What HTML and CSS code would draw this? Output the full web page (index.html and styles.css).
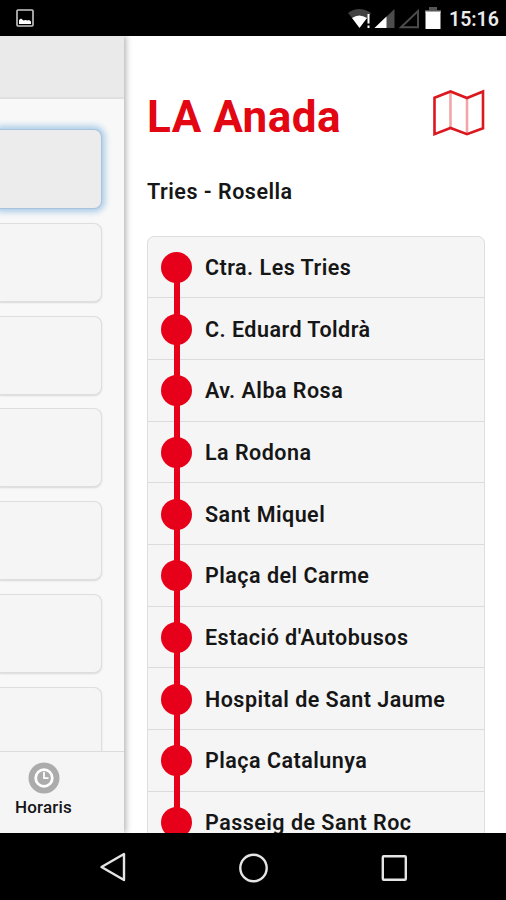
FILE: index.html
```html
<!DOCTYPE html>
<html lang="ca">
<head>
<meta charset="utf-8">
<meta name="viewport" content="width=device-width">
<title>LA Anada</title>
<link rel="stylesheet" href="styles.css">
</head>
<body>
<header class="status">
  <svg class="picture" width="18" height="18" viewBox="0 0 18 18"><rect x="1" y="1" width="16" height="16" rx="1" fill="none" stroke="#c8c8c8" stroke-width="1.6"/><path d="M3 15v-4l2-1.500 2.500 2 2-.5 2 .5 1.500-.5 2 1.500V15z" fill="#fff"/></svg>
  <svg class="signals" width="96" height="24" viewBox="0 0 96 24">
    <path d="M0 6Q11-2 23 6l-4 6H5z" fill="#414141"/><path d="M4 11q7-5 15 0l-7.500 10z" fill="#fff"/><path d="M20.500 7v9.500M20.500 18.500v2.500" stroke="#fff" stroke-width="2"/>
    <path d="M46.500 2v19h-20z" fill="#4c4c4c"/><path d="M38.500 9.500V21h-12z" fill="#fff"/>
    <path d="M70 4v16.200H53z" fill="none" stroke="#4c4c4c" stroke-width="2"/>
    <path d="M81 0h8v3h4v3H77V3h4z" fill="#555"/><path d="M77.500 4.500h15V22h-15z" fill="#fff"/>
  </svg>
  <time>15:16</time>
</header>
<div class="app">
  <aside class="side">
    <div class="side-head"></div>
    <div class="cards">
      <div class="card selected"></div>
      <div class="card"></div>
      <div class="card"></div>
      <div class="card"></div>
      <div class="card"></div>
      <div class="card"></div>
      <div class="card"></div>
    </div>
    <div class="tab">
      <svg width="32" height="32" viewBox="0 0 32 32"><circle cx="16" cy="16" r="15.500" fill="#acacac"/><circle cx="16" cy="16" r="8.300" fill="#acacac" stroke="#fff" stroke-width="2.800"/><path d="M16 10v6.200h4.500" fill="none" stroke="#fff" stroke-width="1.800"/></svg>
      <span>Horaris</span>
    </div>
  </aside>
  <main class="detail">
    <div class="heading">
      <h1>LA Anada</h1>
      <svg class="map" width="54" height="48" viewBox="0 0 54 48"><path d="M18.500 3v37M35 9v36" stroke="#f3a5a8" stroke-width="2.600"/><path d="M2.500 8.700L18.500 2.500 35 9l16-6.500v36.800L35 45.200 18.500 39 2.500 45.200z" fill="none" stroke="#db1720" stroke-width="2.600"/></svg>
    </div>
    <h2>Tries - Rosella</h2>
    <ul class="stops">
      <li><i></i><span>Ctra. Les Tries</span></li>
      <li><i></i><span>C. Eduard Toldrà</span></li>
      <li><i></i><span>Av. Alba Rosa</span></li>
      <li><i></i><span>La Rodona</span></li>
      <li><i></i><span>Sant Miquel</span></li>
      <li><i></i><span>Plaça del Carme</span></li>
      <li><i></i><span>Estació d'Autobusos</span></li>
      <li><i></i><span>Hospital de Sant Jaume</span></li>
      <li><i></i><span>Plaça Catalunya</span></li>
      <li><i></i><span>Passeig de Sant Roc</span></li>
    </ul>
  </main>
</div>
<nav class="navbar">
  <svg width="506" height="67" viewBox="0 0 506 67" fill="none" stroke="#e6e4e4" stroke-width="2.400" stroke-linejoin="round"><path d="M124 21v26L101.500 34z"/><circle cx="253.500" cy="35" r="13.200"/><rect x="382.800" y="23.300" width="23" height="23.500" rx="1"/></svg>
</nav>
</body>
</html>
```
FILE: styles.css
```css
* { box-sizing: border-box; }
body { margin: 0; width: 506px; height: 900px; overflow: hidden; display: flex; flex-direction: column; background: #fff; font-family: Roboto, sans-serif; color: #161616; }
svg { display: block; flex: none; }
.status { height: 36px; flex: none; background: #000; display: flex; align-items: flex-start; padding: 0 8px 0 16px; }
.picture { margin-top: 9px; }
.signals { margin: 7px 5px 0 auto; }
.status time { color: #ececec; font-size: 19.5px; font-weight: 600; line-height: 24px; margin-top: 8px; width: 49px; white-space: nowrap; }
.app { height: 797px; flex: none; display: flex; overflow: hidden; }
.side { width: 124px; flex: none; display: flex; flex-direction: column; background: #f8f8f8; box-shadow: 2px 0 6px rgba(0, 0, 0, .3); }
.side-head { height: 63px; flex: none; background: #eaeaea; border-bottom: 2px solid #e0e0e0; }
.cards { flex: 1; min-height: 0; overflow: hidden; padding: 30px 22px 0 0; }
.card { height: 79px; margin-bottom: 13.8px; background: #f5f5f5; border: 1px solid #dedede; border-left: 0; border-radius: 0 8px 8px 0; box-shadow: 0 1px 2px rgba(0, 0, 0, .13); }
.card.selected { height: 80px; background: #ececec; border-color: #a9c3dc; box-shadow: 0 0 6px 3px #a9cbe8; }
.tab { height: 82px; flex: none; border-top: 1px solid #dcdcdc; background: #f5f5f5; padding: 10px 37px 0 0; display: flex; flex-direction: column; align-items: center; }
.tab span { font-size: 17px; font-weight: 500; line-height: 22px; margin-top: 2px; letter-spacing: .2px; }
.detail { flex: 1; min-width: 0; padding: 0 21px 0 23px; }
.heading { height: 136px; display: flex; justify-content: space-between; }
h1 { margin: 55px 0 0; font-size: 44px; line-height: 52px; font-weight: 700; color: #e30613; white-space: nowrap; letter-spacing: .5px; }
.map { margin: 53px -1px 0 0; }
h2 { margin: 6px 0 0; font-size: 21.5px; line-height: 28px; font-weight: 600; letter-spacing: .5px; }
.stops { list-style: none; margin: 29.5px 0 0; padding: 0; border: 1px solid #dedede; border-radius: 7px; background: #f5f5f5; }
.stops li { height: 61.7px; display: flex; align-items: center; border-bottom: 1px solid #dcdcdc; padding: 1px 0 0 13px; font-size: 21.5px; font-weight: 600; letter-spacing: .48px; white-space: nowrap; }
.stops i { width: 31px; height: 31px; margin-right: 13px; border-radius: 50%; background: #e60019; position: relative; }
.stops li:not(:last-child) i::after { content: ""; position: absolute; left: 13px; top: 28px; width: 6px; height: 38px; background: #e60019; }
.navbar { height: 67px; flex: none; background: #000; }
```
